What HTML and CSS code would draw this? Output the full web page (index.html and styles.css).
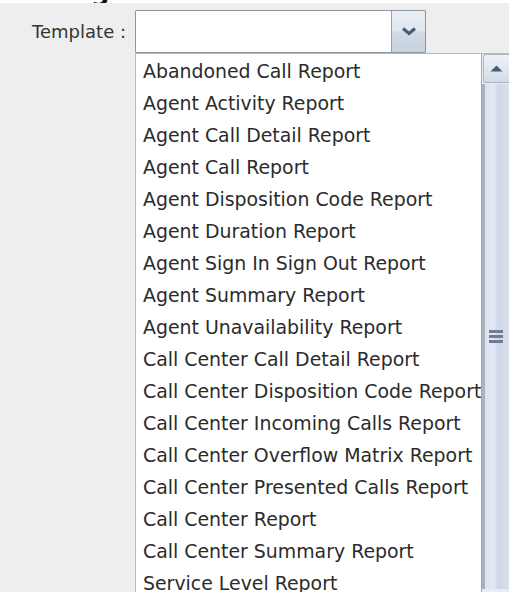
FILE: index.html
```html
<!DOCTYPE html>
<html lang="en">
<head>
<meta charset="utf-8">
<title>Report template</title>
<link rel="stylesheet" href="styles.css">
</head>
<body>
  <div class="heading-strip"><span class="heading-text">g</span></div>

  <div class="field-row">
    <label class="field-label" for="template">Template :</label>
    <div class="combo" id="template">
      <div class="combo-value"></div>
      <div class="combo-button">
        <svg width="16" height="9" viewBox="0 0 16 9" aria-hidden="true">
          <path d="M2 1.5 L8 6.5 L14 1.5" fill="none" stroke="#4a5878" stroke-width="3" stroke-linejoin="miter"/>
        </svg>
      </div>
    </div>
  </div>

  <div class="popup">
    <ul class="option-list">
      <li>Abandoned Call Report</li>
      <li>Agent Activity Report</li>
      <li>Agent Call Detail Report</li>
      <li>Agent Call Report</li>
      <li>Agent Disposition Code Report</li>
      <li>Agent Duration Report</li>
      <li>Agent Sign In Sign Out Report</li>
      <li>Agent Summary Report</li>
      <li>Agent Unavailability Report</li>
      <li>Call Center Call Detail Report</li>
      <li>Call Center Disposition Code Report</li>
      <li>Call Center Incoming Calls Report</li>
      <li>Call Center Overflow Matrix Report</li>
      <li>Call Center Presented Calls Report</li>
      <li>Call Center Report</li>
      <li>Call Center Summary Report</li>
      <li>Service Level Report</li>
    </ul>
    <div class="scrollbar">
      <div class="scroll-up">
        <svg width="13" height="7" viewBox="0 0 13 7" aria-hidden="true">
          <path d="M0.5 6.5 L6.5 0.5 L12.5 6.5 Z" fill="#4d5b7c"/>
        </svg>
      </div>
      <div class="scroll-thumb">
        <div class="grip"><span></span><span></span><span></span></div>
      </div>
    </div>
  </div>
</body>
</html>
```

FILE: styles.css
```css
html, body {
  margin: 0;
  padding: 0;
}

body {
  width: 509px;
  height: 592px;
  overflow: hidden;
  background: #eeeeee;
  font-family: "DejaVu Sans", "Liberation Sans", sans-serif;
  color: #2a2a2a;
}

/* bottom edge of the page heading that sits above this panel */
.heading-strip {
  height: 3px;
  background: #ffffff;
  overflow: hidden;
  padding-left: 91px;
}

.heading-text {
  display: block;
  margin-top: -22px;
  font-size: 26px;
  line-height: 26px;
  font-weight: bold;
  color: #111111;
}

.field-row {
  display: flex;
  align-items: center;
  margin-top: 7px;
  height: 43px;
}

.field-label {
  width: 126px;
  text-align: right;
  padding-right: 9px;
  box-sizing: border-box;
  width: 135px;
  font-size: 18px;
  color: #333333;
}

.combo {
  display: flex;
  width: 291px;
  height: 43px;
  box-sizing: border-box;
  border: 1px solid #8e959e;
  border-radius: 1px;
  background: #ffffff;
}

.combo-value {
  flex: 1;
}

.combo-button {
  width: 33px;
  border-left: 1px solid #9aa1aa;
  display: flex;
  align-items: center;
  justify-content: center;
  background: linear-gradient(to bottom, #e9eef4 0%, #dfe6ee 48%, #d0d9e4 52%, #c9d3df 100%);
}

.combo-button svg {
  margin-top: -1px;
}

.popup {
  display: flex;
  margin-left: 135px;
  width: 376px;
  height: 560px;
  box-sizing: border-box;
  border: 1px solid #a9bdd2;
  background: #ffffff;
}

.option-list {
  list-style: none;
  margin: 0;
  padding: 1px 0 0 7px;
  flex: 1;
  overflow: hidden;
  font-size: 18.9px;
  line-height: 32px;
  white-space: nowrap;
  color: #2b2b2b;
}

.scrollbar {
  width: 28px;
  display: flex;
  flex-direction: column;
  border-left: 1px solid #9ea7b4;
  background: #e9edf3;
}

.scroll-up {
  height: 29px;
  margin: 0 0 1px 1px;
  box-sizing: border-box;
  border: 1px solid #aab5c6;
  border-radius: 2px;
  display: flex;
  align-items: center;
  justify-content: center;
  background: linear-gradient(to bottom, #eef2f7 0%, #e2e8f0 50%, #d3dbe7 100%);
}

.scroll-thumb {
  height: 505px;
  display: flex;
  align-items: center;
  justify-content: center;
  border-left: 3px solid #a8b2c3;
  background: linear-gradient(to right, #dbe3f0 0%, #e2e8f3 35%, #cfd8e7 55%, #d8e0ec 100%);
}

.grip {
  display: flex;
  flex-direction: column;
  gap: 2px;
  margin-left: -3px;
}

.grip span {
  display: block;
  width: 14px;
  height: 3px;
  background: #6f7d98;
}
```
